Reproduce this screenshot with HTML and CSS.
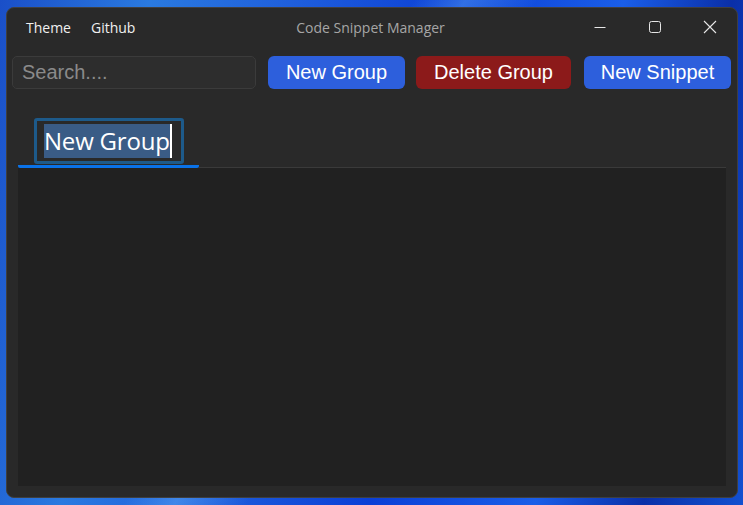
FILE: index.html
```html
<!DOCTYPE html>
<html>
<head>
<meta charset="utf-8">
<link rel="stylesheet" href="styles.css">
</head>
<body>
<div class="desktop">
  <div class="window">
    <div class="titlebar">
      <div class="menu">
        <span class="menu-item">Theme</span>
        <span class="menu-item">Github</span>
      </div>
      <div class="title">Code Snippet Manager</div>
      <div class="controls">
        <span class="ctl">
          <svg width="12" height="12" viewBox="0 0 12 12"><path d="M0.5 6.5h11" stroke="#e6e6e6" stroke-width="1"/></svg>
        </span>
        <span class="ctl">
          <svg width="12" height="12" viewBox="0 0 12 12"><rect x="0.5" y="0.5" width="11" height="11" rx="2" fill="none" stroke="#e6e6e6" stroke-width="1"/></svg>
        </span>
        <span class="ctl">
          <svg width="14" height="14" viewBox="0 0 14 14"><path d="M1 1l12 12M13 1l-12 12" stroke="#e6e6e6" stroke-width="1.1"/></svg>
        </span>
      </div>
    </div>
    <div class="toolbar">
      <div class="search">Search....</div>
      <button class="btn btn-blue btn-group">New Group</button>
      <button class="btn btn-red">Delete Group</button>
      <button class="btn btn-blue btn-snippet">New Snippet</button>
    </div>
    <div class="tabs">
      <div class="tab">
        <div class="tab-edit"><span class="sel">New Group</span><span class="caret"></span></div>
      </div>
      <div class="tab-rest"></div>
    </div>
    <div class="panel"></div>
  </div>
</div>
</body>
</html>
```
FILE: styles.css
```css
html, body {
  margin: 0;
  padding: 0;
  width: 743px;
  height: 505px;
  overflow: hidden;
}
.desktop {
  width: 743px;
  height: 505px;
  box-sizing: border-box;
  padding: 7px 5px 7px 6px;
  background:
    linear-gradient(120deg, transparent 0 40%, rgba(120,200,255,0.35) 45%, transparent 52%),
    linear-gradient(100deg, #1a4fc8 0%, #2a7ae0 18%, #1f5fdc 35%, #0b3fd6 55%, #1a5ee8 75%, #0a2fa8 88%, #1250d0 100%);
  background-color: #0b3aa8;
  font-family: "Liberation Sans", Arial, sans-serif;
}
.window {
  width: 732px;
  height: 491px;
  box-sizing: border-box;
  background: #292929;
  border: 1px solid #3f3f3f;
  border-radius: 8px;
  display: flex;
  flex-direction: column;
  overflow: hidden;
}
.titlebar {
  height: 39px;
  display: flex;
  align-items: center;
  position: relative;
  flex: none;
}
.menu {
  display: flex;
  gap: 20px;
  padding-left: 19px;
  font-family: "Open Sans", "Noto Sans", sans-serif;
  font-size: 14px;
  color: #f0f0f0;
  padding-bottom: 1px;
}
.title {
  position: absolute;
  left: 0;
  right: 0;
  top: 0;
  height: 39px;
  line-height: 39px;
  text-align: center;
  font-family: "Open Sans", "Noto Sans", sans-serif;
  font-size: 14px;
  color: #a6a6a6;
  pointer-events: none;
  padding-right: 3px;
}
.controls {
  margin-left: auto;
  display: flex;
  height: 100%;
  padding-bottom: 1px;
  box-sizing: border-box;
}
.ctl {
  width: 55px;
  display: flex;
  align-items: center;
  justify-content: center;
}
.toolbar {
  display: flex;
  align-items: center;
  padding: 9px 6px 0 5px;
  height: 33px;
  flex: none;
}
.search {
  width: 244px;
  height: 33px;
  box-sizing: border-box;
  background: #2d2d2d;
  border: 1px solid #3b3b3b;
  border-radius: 5px;
  color: #8a8a8a;
  font-size: 20px;
  padding-left: 9px;
  line-height: 31px;
}
.btn {
  height: 33px;
  border: none;
  border-radius: 6px;
  color: #ffffff;
  font-family: "Liberation Sans", Arial, sans-serif;
  font-size: 20px;
  padding: 0;
  line-height: 33px;
}
.btn-blue { background: #2d5fdc; }
.btn-red { background: #8c1a1a; width: 155px; margin-left: 11px; }
.btn-group { width: 137px; margin-left: 12px; }
.btn-snippet { width: 147px; margin-left: 13px; }
.tabs {
  display: flex;
  align-items: flex-end;
  margin: 0 11px 0 11px;
  padding-top: 28px;
  flex: none;
}
.tab {
  width: 181px;
  height: 51px;
  box-sizing: border-box;
  border-bottom: 3px solid #0a72e8;
  border-radius: 0 0 2px 2px;
  padding: 1px 0 0 16px;
}
.tab-edit {
  width: 150px;
  height: 46px;
  box-sizing: border-box;
  border: 3px solid #1d5a8a;
  border-radius: 3px;
  padding: 3px 0 0 7px;
  display: flex;
  align-items: flex-start;
}
.sel {
  background: #3a5c86;
  color: #ffffff;
  font-family: "Open Sans", "Noto Sans", sans-serif;
  font-size: 24px;
  line-height: 34px;
  height: 34px;
  padding: 0;
  letter-spacing: -0.2px;
}
.caret {
  width: 2px;
  height: 34px;
  background: #ffffff;
}
.tab-rest {
  flex: 1;
  height: 1px;
  background: #3a3a3a;
}
.panel {
  margin: 0 11px 11px 11px;
  flex: 1;
  background: #212121;
}
```
